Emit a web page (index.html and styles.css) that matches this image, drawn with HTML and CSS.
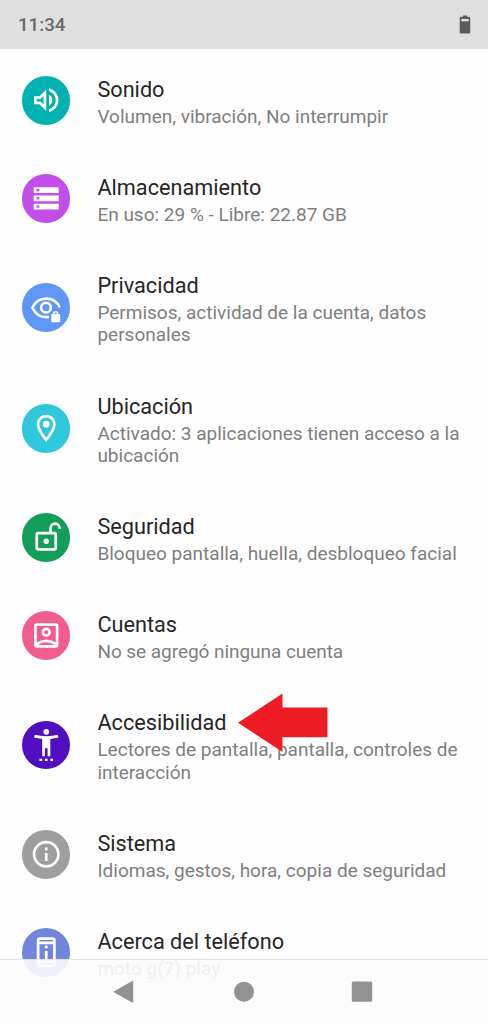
FILE: index.html
```html
<!DOCTYPE html>
<html lang="es">
<head>
<meta charset="utf-8">
<title>Ajustes</title>
<link rel="stylesheet" href="styles.css">
</head>
<body>
<div class="screen">
  <header class="status">
    <span class="clock">11:34</span>
    <svg class="battery" viewBox="0 0 12 19"><path fill="#5c5c5c" d="M4 .5h4v1.300h2.200q1 0 1 1v14.700q0 1-1 1H1.700q-1 0-1-1V2.800q0-1 1-1H4z"/><path fill="#e0e0e0" d="M2.300 4h7.300v2.300H2.300z"/></svg>
  </header>
  <main class="list">
    <section class="row">
      <div class="icon sound"><svg viewBox="0 0 24 24"><path d="M3 9v6h4l5 5V4L7 9H3zm7-.17v6.340L7.830 13H5v-2h2.830L10 8.830zM16.500 12A4.500 4.500 0 0 0 14 7.970v8.050c1.480-.73 2.500-2.250 2.500-4.020zM14 3.230v2.060c2.890.86 5 3.540 5 6.710s-2.110 5.850-5 6.710v2.060c4.010-.91 7-4.490 7-8.770s-2.990-7.860-7-8.770z"/></svg></div>
      <div class="text"><h2>Sonido</h2><p>Volumen, vibración, No interrumpir</p></div>
    </section>
    <section class="row">
      <div class="icon storage"><svg viewBox="0 0 24 24"><path fill-rule="evenodd" d="M2.700 3.800h18.500v4.300H2.700zM4.900 5v2h2V5zM2.700 9.900h18.500v4.300H2.700zM4.900 11v2h2v-2zM2.700 16h18.500v4.300H2.700zM4.900 17.100v2h2v-2z"/></svg></div>
      <div class="text"><h2>Almacenamiento</h2><p>En uso: 29 % - Libre: 22.87 GB</p></div>
    </section>
    <section class="row double">
      <div class="icon privacy"><svg viewBox="0 0 24 24"><g fill="none" stroke="#fff" stroke-width="1.900"><path d="M14 18.400Q5.500 19.600 1.800 11.600C5.800 2.700 18.100 2.700 22 11.400"/><circle cx="11.800" cy="11.600" r="3.600"/></g><path fill-rule="evenodd" d="M15.700 17q0-.7.700-.7h.6V16a2 2 0 0 1 4 0v.300h.6q.7 0 .7.700v4.700q0 .6-.7.600h-5.200q-.7 0-.7-.6zM18.200 16.300h1.600V16q0-.8-.8-.8t-.8.800z"/></svg></div>
      <div class="text"><h2>Privacidad</h2><p>Permisos, actividad de la cuenta, datos<br>personales</p></div>
    </section>
    <section class="row double">
      <div class="icon location"><svg viewBox="0 0 24 24"><path d="M12 2C8.130 2 5 5.130 5 9c0 5.250 7 13 7 13s7-7.750 7-13c0-3.870-3.130-7-7-7zM7 9c0-2.760 2.240-5 5-5s5 2.240 5 5c0 2.880-2.880 7.190-5 9.880C9.920 16.210 7 11.850 7 9z"/><circle cx="12" cy="9" r="2.500"/></svg></div>
      <div class="text"><h2>Ubicación</h2><p>Activado: 3 aplicaciones tienen acceso a la<br>ubicación</p></div>
    </section>
    <section class="row">
      <div class="icon security"><svg viewBox="0 0 24 24"><g fill="none" stroke="#fff" stroke-width="2"><rect x="5" y="9" width="14" height="12" rx=".8"/><path d="M15.200 9V5.200a3.300 3.300 0 0 1 6.600 0v.6"/></g><circle cx="12" cy="15" r="2"/></svg></div>
      <div class="text"><h2>Seguridad</h2><p>Bloqueo pantalla, huella, desbloqueo facial</p></div>
    </section>
    <section class="row">
      <div class="icon accounts"><svg viewBox="0 0 24 24"><g fill="none" stroke="#fff" stroke-width="2"><rect x="4" y="4.200" width="16" height="16" rx="1"/><circle cx="12" cy="9.800" r="2.500"/><path d="M4.500 18.700Q12 13.600 19.500 18.700"/></g></svg></div>
      <div class="text"><h2>Cuentas</h2><p class="snug">No se agregó ninguna cuenta</p></div>
    </section>
    <section class="row double">
      <div class="icon access"><svg viewBox="0 0 24 24"><circle cx="12" cy="2.100" r="2.100"/><path d="M20.500 4.300C17.900 5 14.800 5.300 12 5.300S6.100 5 3.500 4.300L3 6.300c1.860.5 4 .83 6 1v12.900h2v-6h2v6h2V7.300c2-.17 4.140-.5 6-1zM7 22h2v2H7zM11 22h2v2h-2zM15 22h2v2h-2z"/></svg></div>
      <div class="text"><h2>Accesibilidad</h2><p>Lectores de pantalla, pantalla, controles de<br>interacción</p></div>
      <svg class="arrow" viewBox="0 0 90 60"><path d="M0 29.700 44.500.5v14h45v29.800h-45V59z"/></svg>
    </section>
    <section class="row">
      <div class="icon system"><svg viewBox="0 0 24 24"><path d="M11 7h2v2h-2zm0 4h2v6h-2zm1-9C6.480 2 2 6.480 2 12s4.480 10 10 10 10-4.480 10-10S17.520 2 12 2zm0 18c-4.410 0-8-3.590-8-8s3.590-8 8-8 8 3.590 8 8-3.590 8-8 8z"/></svg></div>
      <div class="text"><h2>Sistema</h2><p>Idiomas, gestos, hora, copia de seguridad</p></div>
    </section>
    <section class="row">
      <div class="icon phone"><svg viewBox="0 0 24 24"><path d="M13 7h-2v2h2V7zm0 4h-2v6h2v-6zm4-9.990L7 1c-1.100 0-2 .9-2 2v18c0 1.100.9 2 2 2h10c1.100 0 2-.9 2-2V3c0-1.100-.9-1.990-2-1.990zM17 21H7v-1h10v1zm0-3H7V6h10v12zm0-14H7V3h10v1z"/></svg></div>
      <div class="text"><h2>Acerca del teléfono</h2><p>moto g(7) play</p></div>
    </section>
  </main>
  <nav class="navbar">
    <svg viewBox="0 0 22 24"><path d="M1.200 11.300 19.200 1q1-.5 1 .6v20.200q0 1.100-1 .6L1.200 12.400q-1-.55 0-1.100z"/></svg>
    <svg viewBox="0 0 22 24"><circle cx="11" cy="11.800" r="10"/></svg>
    <svg viewBox="0 0 22 24"><rect x=".8" y="1.400" width="20.400" height="20.400" rx="1.500"/></svg>
  </nav>
</div>
</body>
</html>
```
FILE: styles.css
```css
body {
  margin: 0;
  background: #fefefe;
  font-family: Roboto, "Noto Sans", sans-serif;
}

.screen {
  position: relative;
  width: 488px;
  height: 1024px;
  overflow: hidden;
}

.status {
  display: flex;
  align-items: center;
  justify-content: space-between;
  box-sizing: border-box;
  height: 48.7px;
  padding: 1px 17px 0 18px;
  background: #e0e0e0;
}

.clock {
  color: #6a6a6a;
  font-size: 18.7px;
  font-weight: 500;
  line-height: 22px;
}

.battery {
  width: 12px;
  height: 19px;
}

.list {
  padding-top: 2.5px;
}

.row {
  position: relative;
  display: flex;
  align-items: center;
  gap: 27px;
  height: 98.2px;
  padding-left: 21.6px;
}

.double {
  height: 120.4px;
}

.icon {
  display: flex;
  flex: none;
  align-items: center;
  justify-content: center;
  width: 48.8px;
  height: 48.8px;
  border-radius: 50%;
}

.icon svg {
  width: 32.5px;
  height: 32.5px;
  fill: #fff;
}

.sound { background: #00b1b1; }
.storage { background: #c24de7; }
.privacy { background: #5e97f6; }
.location { background: #2fc7dc; }
.security { background: #129e59; }
.accounts { background: #f25c90; }
.access { background: #4f0fc0; }
.system { background: #9e9e9e; }
.phone { background: #6f86da; }

.text {
  align-self: flex-start;
  padding-top: 25.7px;
  white-space: nowrap;
}

h2 {
  margin: 0;
  color: #262626;
  font-size: 21.7px;
  font-weight: 400;
  line-height: 25.4px;
}

p {
  margin: 3.5px 0 0;
  color: #7f7f7f;
  font-size: 19px;
  line-height: 22.3px;
}

.snug {
  letter-spacing: -0.05px;
}

.arrow {
  position: absolute;
  top: 7.8px;
  left: 238px;
  width: 90px;
  height: 60px;
  fill: #ee1c24;
}

.navbar {
  position: absolute;
  right: 0;
  bottom: 0;
  left: 0;
  display: flex;
  justify-content: center;
  gap: 96px;
  box-sizing: border-box;
  height: 65px;
  padding-top: 19.500px;
  border-top: 1.500px solid #e4e4e4;
  background: rgba(252, 252, 252, 0.9);
}

.navbar svg {
  width: 22px;
  height: 24px;
  fill: #929292;
}

.navbar svg:first-child {
  margin: 0 2px 0 -2px;
}
```
